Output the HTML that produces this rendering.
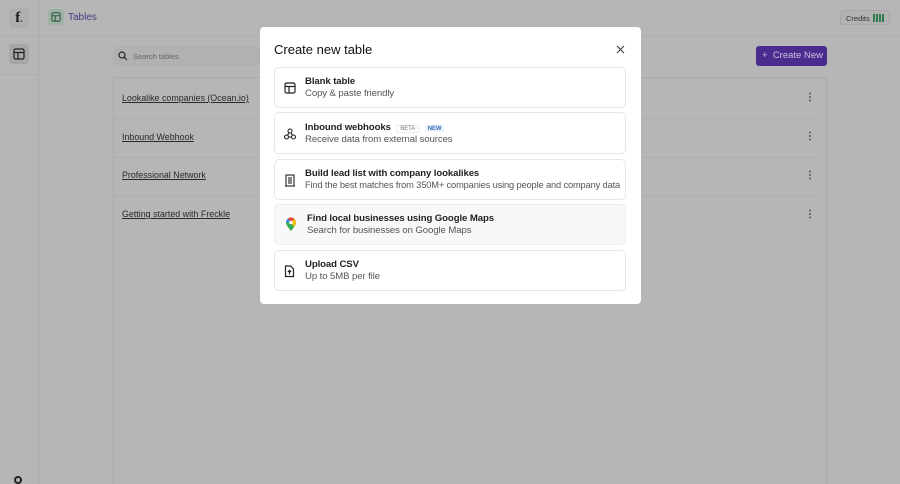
<!DOCTYPE html>
<html style="background:#b6b6b6;overflow:hidden"><head><style>
*{box-sizing:border-box;margin:0;padding:0}
body{width:900px;height:484px;overflow:hidden;background:#b6b6b6;font-family:"Liberation Sans",sans-serif;position:relative}
.abs{position:absolute}
.mi{position:absolute;left:14px;width:352px;border:1px solid #e6e6e6;border-radius:5px;background:#fff}
.mi .t{position:absolute;left:30px;font-size:9.6px;color:#222;white-space:nowrap;font-weight:bold;letter-spacing:-0.1px}
.mi .s{position:absolute;left:30px;font-size:9.6px;color:#555;white-space:nowrap;letter-spacing:-0.1px}
.mi svg{position:absolute;left:9px}
.row{position:absolute;left:122px;font-size:8.9px;color:#2a2a2a;text-decoration:underline;white-space:nowrap}
.dots{position:absolute;left:805px;font-size:10px;color:#333;font-weight:bold}
.hl{position:absolute;left:114px;width:702px;height:1px;background:#adadad}
.cb{display:inline-block;width:2px;height:8px;background:#2f7a4a;margin-left:1px;vertical-align:-1px}
</style></head><body>
<div class="abs" style="left:38px;top:0;width:1px;height:484px;background:#a9a9a9"></div>
<div class="abs" style="left:0;top:36px;width:900px;height:1px;background:#adadad"></div>
<div class="abs" style="left:0;top:74px;width:38px;height:1px;background:#adadad"></div>
<div class="abs" style="left:9px;top:8px;width:20px;height:20px;border-radius:4px;background:#aeaeae;font-family:'Liberation Serif',serif;font-weight:bold;font-size:15px;color:#1a1a1a;text-align:center;line-height:20px">f<span style="color:#4a3a80;font-size:10px">.</span></div>
<div class="abs" style="left:9px;top:44px;width:20px;height:20px;border-radius:4px;background:#a6a6a6"></div>
<svg class="abs" style="left:13px;top:48px" width="12" height="12" viewBox="0 0 12 12" fill="none" stroke="#222" stroke-width="1.2"><rect x="1" y="1" width="10" height="10" rx="1.5"/><path d="M1 4.5h10M5 4.5v6.5"/></svg>
<div class="abs" style="left:48px;top:9px;width:16px;height:16px;border-radius:3px;background:#9fb0a5"></div>
<svg class="abs" style="left:51px;top:12px" width="10" height="10" viewBox="0 0 12 12" fill="none" stroke="#2f5a3f" stroke-width="1.3"><rect x="1" y="1" width="10" height="10" rx="1.5"/><path d="M1 4.5h10M5 4.5v6.5"/></svg>
<div class="abs" style="left:68px;top:12px;font-size:10px;color:#4b3a82">Tables</div>
<div class="abs" style="left:840px;top:10px;width:50px;height:15px;border:1px solid #a8a8a8;border-radius:3px;background:#b2b2b2;font-size:7.5px;color:#333;padding:3px 0 0 5px;white-space:nowrap">Credits <span class="cb"></span><span class="cb"></span><span class="cb"></span><span class="cb"></span></div>
<div class="abs" style="left:113px;top:46px;width:150px;height:20px;background:#b1b1b1;border-radius:4px"></div>
<svg class="abs" style="left:118px;top:51px" width="10" height="10" viewBox="0 0 10 10" fill="none" stroke="#222" stroke-width="1.2"><circle cx="4" cy="4" r="3"/><path d="M6.3 6.3L9 9"/></svg>
<div class="abs" style="left:133px;top:52px;font-size:7.5px;color:#666">Search tables</div>
<div class="abs" style="left:756px;top:46px;width:71px;height:20px;background:#4b2c8e;border-radius:3px;color:#c9c0e0;font-size:9.5px;line-height:20px;padding-left:6px;white-space:nowrap">+&nbsp; Create New</div>
<div class="abs" style="left:113px;top:77px;width:714px;height:420px;border:1px solid #aaa;border-radius:4px"></div>
<div class="row" style="top:93px">Lookalike companies (Ocean.io)</div>
<div class="row" style="top:132px">Inbound Webhook</div>
<div class="row" style="top:170px">Professional Network</div>
<div class="row" style="top:209px">Getting started with Freckle</div>
<div class="hl" style="top:118px"></div><div class="hl" style="top:157px"></div><div class="hl" style="top:195px"></div>
<div class="dots" style="top:92px">⋮</div><div class="dots" style="top:131px">⋮</div><div class="dots" style="top:170px">⋮</div><div class="dots" style="top:209px">⋮</div>
<div class="abs" style="left:14px;top:476px;width:8px;height:8px;border:2px solid #222;border-radius:50%"></div>

<div class="abs" style="left:260px;top:27px;width:381px;height:277px;background:#fff;border-radius:4px">
<div class="abs" style="left:14px;top:15px;font-size:13px;color:#111">Create new table</div>
<svg class="abs" style="left:356px;top:18px" width="9" height="9" viewBox="0 0 9 9" stroke="#444" stroke-width="1.2"><path d="M1 1l7 7M8 1L1 8"/></svg>
<div class="mi" style="top:40px;height:41px">
<svg style="top:14px" width="12" height="12" viewBox="0 0 12 12" fill="none" stroke="#222" stroke-width="1.2"><rect x="1" y="1" width="10" height="10" rx="1.5"/><path d="M1 4.5h10M5 4.5v6.5"/></svg>
<div class="t" style="top:8px">Blank table</div><div class="s" style="top:20px">Copy &amp; paste friendly</div></div>
<div class="mi" style="top:85px;height:42px">
<svg style="top:15px" width="12" height="12" viewBox="0 0 12 12" fill="none" stroke="#222" stroke-width="1.1"><circle cx="6" cy="3" r="2"/><circle cx="2.5" cy="9" r="2"/><circle cx="9.5" cy="9" r="2"/><path d="M5 4.8L3.5 7.3M4.5 9h3M7 4.8l1.5 2.5"/></svg>
<div class="t" style="top:9px">Inbound webhooks <span style="font-size:6px;color:#777;border:1px solid #eee;padding:0 3px;margin-left:3px;font-weight:normal">BETA</span> <span style="font-size:6px;color:#3a6fc0;background:#eef3fb;padding:0 3px;margin-left:3px">NEW</span></div>
<div class="s" style="top:21px">Receive data from external sources</div></div>
<div class="mi" style="top:132px;height:41px">
<svg style="top:14px" width="12" height="13" viewBox="0 0 12 13" fill="none" stroke="#222" stroke-width="1.1"><rect x="2" y="1" width="8" height="11"/><path d="M5 3v7M7 3v7M1 12h10"/></svg>
<div class="t" style="top:8px">Build lead list with company lookalikes</div><div class="s" style="top:20px;font-size:9.3px;letter-spacing:-0.15px">Find the best matches from 350M+ companies using people and company data</div></div>
<div class="mi" style="top:177px;height:41px;background:#f8f8f8;border-color:#eee">
<svg style="left:10px;top:12px" width="12" height="15" viewBox="0 0 12 15"><path d="M6 14C3 10 1 8 1 5.5A5 5 0 0 1 11 5.5C11 8 9 10 6 14Z" fill="#34a853"/><path d="M1 5.5A5 5 0 0 1 3 1.5L6 5Z" fill="#4285f4"/><path d="M3 1.5A5 5 0 0 1 9.5 2L6 5Z" fill="#ea4335"/><path d="M9.5 2A5 5 0 0 1 11 5.5C11 7 10 8.5 9 10L6 5Z" fill="#fbbc04"/><circle cx="6" cy="5.5" r="1.8" fill="#fff"/></svg>
<div class="t" style="top:8px;left:32px">Find local businesses using Google Maps</div><div class="s" style="top:20px;left:32px">Search for businesses on Google Maps</div></div>
<div class="mi" style="top:223px;height:41px">
<svg style="top:14px" width="11" height="13" viewBox="0 0 11 13" fill="none" stroke="#222" stroke-width="1.2"><path d="M1.5 1h5l3 3v7.5h-8z"/><path d="M5.5 9.5v-4M3.8 7L5.5 5.3 7.2 7"/></svg>
<div class="t" style="top:8px">Upload CSV</div><div class="s" style="top:20px">Up to 5MB per file</div></div>
</div>
</body></html>
